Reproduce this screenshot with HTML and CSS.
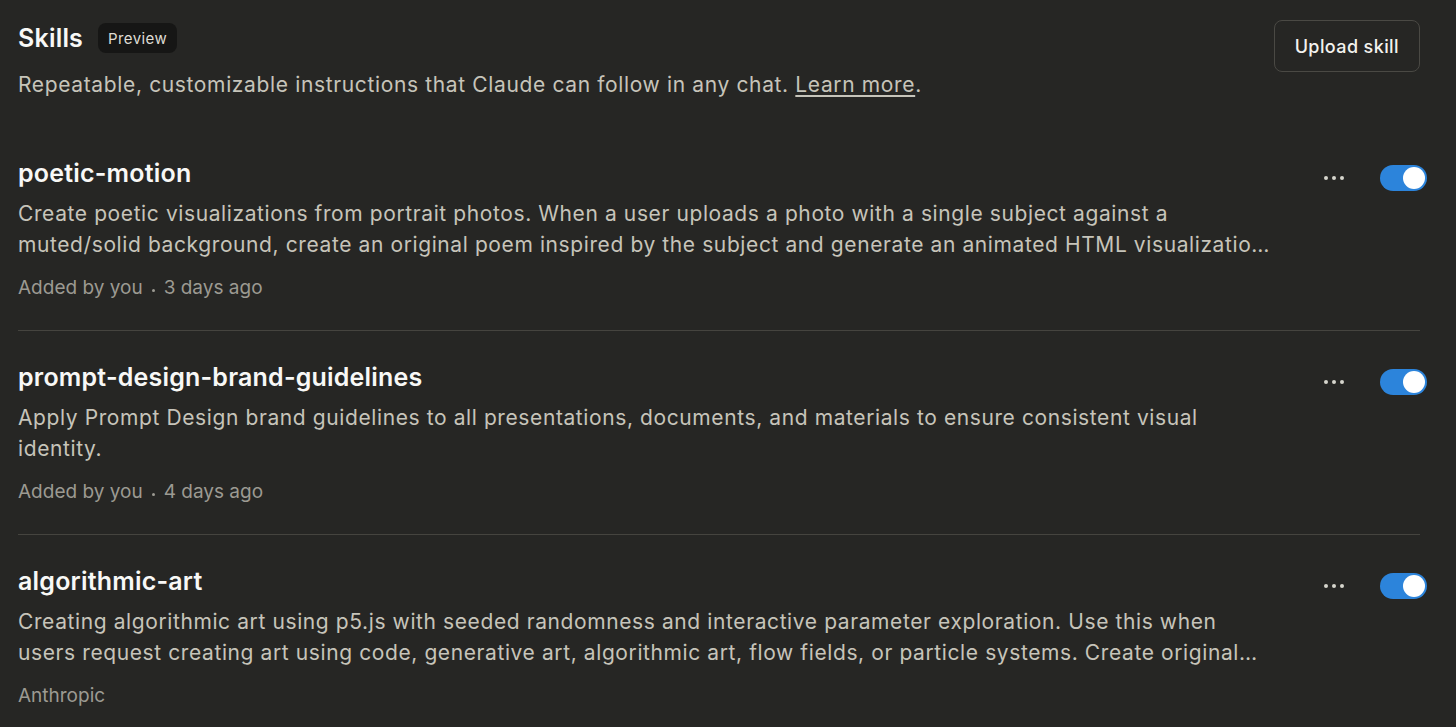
FILE: index.html
```html
<!DOCTYPE html>
<html lang="en">
<head>
<meta charset="utf-8">
<title>Skills</title>
<link rel="stylesheet" href="styles.css">
</head>
<body>
<main class="page">
  <header class="header">
    <div class="header-text">
      <div class="title-row">
        <h1 class="page-title">Skills</h1>
        <span class="badge">Preview</span>
      </div>
      <p class="subtitle">Repeatable, customizable instructions that Claude can follow in any chat. <a class="link" href="#">Learn more</a>.</p>
    </div>
    <button class="upload-btn">Upload skill</button>
  </header>

  <ul class="skill-list">
    <li class="skill">
      <div class="skill-body">
        <h2 class="skill-name">poetic-motion</h2>
        <p class="skill-desc">Create poetic visualizations from portrait photos. When a user uploads a photo with a single subject against a muted/solid background, create an original poem inspired by the subject and generate an animated HTML visualization that brings the poem to life.</p>
        <div class="skill-meta"><span>Added by you</span><span class="dot-sep"></span><span>3 days ago</span></div>
      </div>
      <div class="skill-actions">
        <button class="more" aria-label="More"><span></span><span></span><span></span></button>
        <span class="toggle"><span class="knob"></span></span>
      </div>
    </li>
    <li class="skill">
      <div class="skill-body">
        <h2 class="skill-name">prompt-design-brand-guidelines</h2>
        <p class="skill-desc">Apply Prompt Design brand guidelines to all presentations, documents, and materials to ensure consistent visual identity.</p>
        <div class="skill-meta"><span>Added by you</span><span class="dot-sep"></span><span>4 days ago</span></div>
      </div>
      <div class="skill-actions">
        <button class="more" aria-label="More"><span></span><span></span><span></span></button>
        <span class="toggle"><span class="knob"></span></span>
      </div>
    </li>
    <li class="skill">
      <div class="skill-body">
        <h2 class="skill-name">algorithmic-art</h2>
        <p class="skill-desc">Creating algorithmic art using p5.js with seeded randomness and interactive parameter exploration. Use this when users request creating art using code, generative art, algorithmic art, flow fields, or particle systems. Create original algorithmic art rather than copying existing artists' work.</p>
        <div class="skill-meta"><span>Anthropic</span></div>
      </div>
      <div class="skill-actions">
        <button class="more" aria-label="More"><span></span><span></span><span></span></button>
        <span class="toggle"><span class="knob"></span></span>
      </div>
    </li>
  </ul>
</main>
</body>
</html>
```

FILE: styles.css
```css
* { box-sizing: border-box; }
html, body {
  margin: 0;
  padding: 0;
  background: #262624;
  height: 100%;
}
body {
  font-family: Inter, "Noto Sans", sans-serif;
  color: #c3c2b7;
  overflow: hidden;
}
.page {
  padding: 20px 36px 0 18px;
}
.header {
  display: flex;
  justify-content: space-between;
  align-items: flex-start;
  padding-bottom: 28px;
}
.title-row {
  display: flex;
  align-items: center;
  height: 36px;
  gap: 15px;
}
.page-title {
  margin: 0;
  font-size: 25px;
  font-weight: 600;
  color: #f8f8f6;
  letter-spacing: 0.2px;
}
.badge {
  display: inline-flex;
  align-items: center;
  height: 30px;
  padding: 0 10px;
  border-radius: 8px;
  background: #161615;
  color: #dedcd4;
  font-size: 15px;
  letter-spacing: 0.4px;
}
.subtitle {
  margin: 15px 0 0;
  font-size: 21px;
  line-height: 28px;
  letter-spacing: 0.64px;
  color: #c6c4ba;
}
.link {
  color: #c6c4ba;
  text-decoration: underline;
  text-underline-offset: 3px;
}
.upload-btn {
  height: 52px;
  padding: 0 20px;
  border: 1px solid #4a4944;
  border-radius: 8px;
  background: #262624;
  color: #f3f2ee;
  font-family: inherit;
  font-size: 18px;
  font-weight: 500;
  letter-spacing: 0.4px;
}
.skill-list {
  list-style: none;
  margin: 0;
  padding: 0;
}
.skill {
  display: flex;
  justify-content: space-between;
  align-items: flex-start;
  padding: 30px 0;
  border-bottom: 1px solid #45443f;
}
.skill-body {
  width: 1252px;
}
.skill-name {
  margin: 0;
  font-size: 25px;
  line-height: 32px;
  font-weight: 600;
  letter-spacing: 0.2px;
  color: #f8f8f6;
}
.skill-desc {
  margin: 9px 0 0;
  font-size: 21px;
  line-height: 31px;
  letter-spacing: 0.6px;
  color: #c6c4ba;
  display: -webkit-box;
  -webkit-line-clamp: 2;
  -webkit-box-orient: vertical;
  overflow: hidden;
}
.skill-meta {
  margin-top: 16px;
  display: flex;
  align-items: center;
  gap: 9px;
  font-size: 19px;
  line-height: 24px;
  color: #9c9a92;
}
.dot-sep {
  width: 3px;
  height: 3px;
  border-radius: 50%;
  background: #9c9a92;
  margin-top: 4px;
}
.skill-actions {
  display: flex;
  align-items: center;
  gap: 36px;
  margin-top: 8px;
  margin-right: -7px;
}
.more {
  display: flex;
  gap: 4px;
  padding: 0;
  border: 0;
  background: none;
}
.more span {
  width: 4px;
  height: 4px;
  border-radius: 50%;
  background: #d6d5cd;
}
.toggle {
  display: flex;
  align-items: center;
  justify-content: flex-end;
  width: 47px;
  height: 26px;
  padding: 0 2px;
  border-radius: 13px;
  background: #2c84db;
}
.knob {
  width: 22px;
  height: 22px;
  border-radius: 50%;
  background: #ffffff;
}
```
